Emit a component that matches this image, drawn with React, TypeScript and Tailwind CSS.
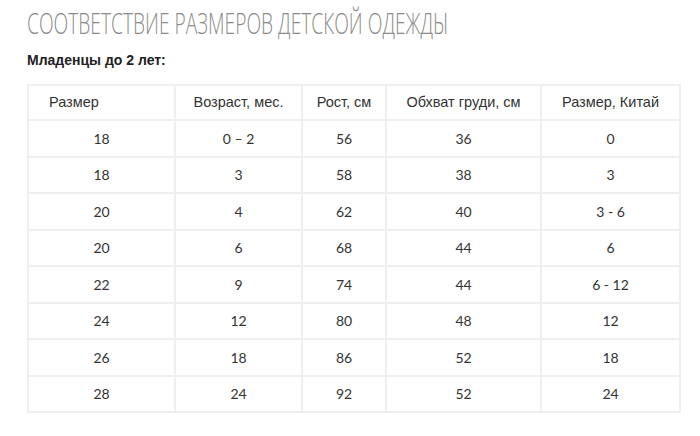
import * as React from "react";

interface SizeRow {
  size: string;
  age: string;
  height: string;
  chest: string;
  china: string;
}

const rows: SizeRow[] = [
  { size: "18", age: "0 – 2", height: "56", chest: "36", china: "0" },
  { size: "18", age: "3", height: "58", chest: "38", china: "3" },
  { size: "20", age: "4", height: "62", chest: "40", china: "3 - 6" },
  { size: "20", age: "6", height: "68", chest: "44", china: "6" },
  { size: "22", age: "9", height: "74", chest: "44", china: "6 - 12" },
  { size: "24", age: "12", height: "80", chest: "48", china: "12" },
  { size: "26", age: "18", height: "86", chest: "52", china: "18" },
  { size: "28", age: "24", height: "92", chest: "52", china: "24" },
];

const cellBase = "border-2 border-[#efefef] text-center";

export default function App() {
  return (
    <div className="w-[700px] h-[436px] bg-white overflow-hidden pl-[27px] pt-[6px]">
      <h1 className="inline-block origin-left scale-x-[0.64] whitespace-nowrap text-[30px] leading-[34px] font-light text-[#8a8a8a] font-['Open_Sans',sans-serif]">
        СООТВЕТСТВИЕ РАЗМЕРОВ ДЕТСКОЙ ОДЕЖДЫ
      </h1>
      <p className="mt-[12px] text-[14px] leading-4 font-bold text-[#222] font-['Liberation_Sans',Arial,sans-serif]">
        Младенцы до 2 лет:
      </p>
      <table className="mt-[16px] border-collapse border-2 border-[#efefef] table-fixed w-[652px]">
        <colgroup>
          <col className="w-[147px]" />
          <col className="w-[127px]" />
          <col className="w-[84px]" />
          <col className="w-[155px]" />
          <col className="w-[139px]" />
        </colgroup>
        <thead>
          <tr className="h-[35px] text-[14.5px] text-[#333] font-['Liberation_Sans',Arial,sans-serif]">
            <th className="border-2 border-[#efefef] text-left font-normal pl-[20px]">Размер</th>
            <th className={`${cellBase} font-normal`}>Возраст, мес.</th>
            <th className={`${cellBase} font-normal`}>Рост, см</th>
            <th className={`${cellBase} font-normal`}>Обхват груди, см</th>
            <th className={`${cellBase} font-normal`}>Размер, Китай</th>
          </tr>
        </thead>
        <tbody className="text-[14px] text-[#333] font-['Lato',sans-serif]">
          {rows.map((r, i) => (
            <tr key={i} className="h-[36.5px]">
              <td className={cellBase}>{r.size}</td>
              <td className={cellBase}>{r.age}</td>
              <td className={cellBase}>{r.height}</td>
              <td className={cellBase}>{r.chest}</td>
              <td className={cellBase}>{r.china}</td>
            </tr>
          ))}
        </tbody>
      </table>
    </div>
  );
}
